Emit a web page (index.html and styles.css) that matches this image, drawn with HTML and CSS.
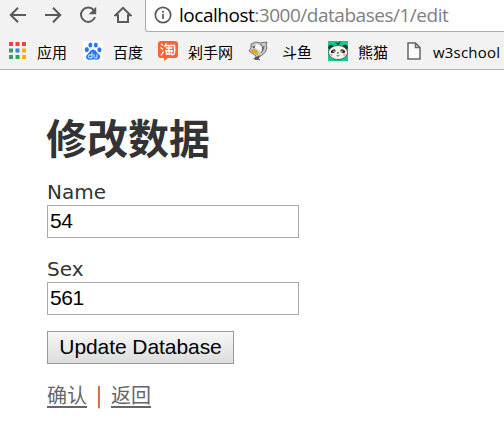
FILE: index.html
```html
<!DOCTYPE html>
<html lang="zh-CN">
<head>
<meta charset="utf-8">
<title>修改数据</title>
<link rel="stylesheet" href="styles.css">
</head>
<body>
<header class="browser">
  <div class="toolbar">
    <nav class="controls">
      <svg width="18" height="18" viewBox="0 0 18 18"><path d="M17 9H2M9 1.8 1.8 9 9 16.2"/></svg>
      <svg width="18" height="18" viewBox="0 0 18 18"><path d="M1 9h15M9 1.8 16.2 9 9 16.2"/></svg>
      <svg width="18" height="18" viewBox="0 0 18 18"><path d="M14.8 4.2A7.2 7.2 0 1 0 16 11"/><path class="solid" d="M17.2.8v7.5H9.7z"/></svg>
      <svg width="18" height="18" viewBox="0 0 18 18"><path d="M1.4 9.3 9 1.8l7.6 7.5H14V16H4V9.3z"/></svg>
    </nav>
    <div class="address">
      <svg width="18" height="18" viewBox="0 0 18 18"><circle cx="9" cy="9" r="7.7"/><path d="M9 8v5M9 4.8v2"/></svg>
      <span class="url"><span class="host">localhost</span>:3000/databases/1/edit</span>
    </div>
  </div>
  <div class="bookmarks">
    <div class="bookmark apps">
      <svg width="17" height="17" viewBox="0 0 17 17"><path fill="#f44336" d="M0 0h4v4H0zM6.5 0h4v4h-4zM13 0h4v4h-4z"/><path fill="#34a060" d="M0 6.5h4v4H0zM0 13h4v4H0zM6.5 13h4v4h-4z"/><path fill="#2f86ee" d="M6.5 6.5h4v4h-4z"/><path fill="#f9ad0b" d="M13 6.5h4v4h-4zM13 13h4v4h-4z"/></svg><span>应用</span>
    </div>
    <div class="bookmark baidu">
      <svg width="20" height="20" viewBox="0 0 20 20"><path fill="#fff" d="M0 0h20v20H0z"/><g fill="#2878f0"><ellipse cx="3.8" cy="8.6" rx="2.1" ry="2.6"/><ellipse cx="7.4" cy="4" rx="2" ry="2.6"/><ellipse cx="12.8" cy="4" rx="2" ry="2.6"/><ellipse cx="16.4" cy="8.7" rx="2.1" ry="2.5"/><path d="M10 8.5c2.5 0 3 2.2 4.7 3.8 2.3 2 3 3.2 2 5-1 2.2-4 1.2-6.7 1.2s-5.2 1-6.5-1c-1.3-2 .2-3.6 2-5.2C7.3 10.8 7.7 8.5 10 8.5z"/></g><path fill="none" stroke="#fff" stroke-width=".9" d="M9 11.5v5.4H6.7q-1.500 0-1.500-1.500t1.500-1.500H9M11 13.300v2.200q0 1.400 1.500 1.400H14v-3.600"/></svg><span>百度</span>
    </div>
    <div class="bookmark taobao">
      <svg width="20" height="20" viewBox="0 0 20 20"><path fill="#fa6533" d="M3 0h14q3 0 3 3v11q0 3-3 3h-7l-4 3v-3H3q-3 0-3-3V3q0-3 3-3z"/><path class="taobao-mark" d="M3 3l2 1.500M2.500 6.500l2.500 2M3 14.500l2.500-4M8 2.500 6.700 6M7.500 4.500h9q.7 9-1 9h-2M8 7h6.500M7 9.700h8M11 5v7M8.500 10.500V13h5v-2.500"/></svg><span>剁手网</span>
    </div>
    <div class="bookmark douyu">
      <svg width="20" height="20" viewBox="0 0 20 20"><path fill="#c8c9c8" stroke="#77736e" d="M3 3Q8-.5 12 2l7-1-1 4 1 1q-.5 6-5 8l-4 3 2 2-5-1 1-3-4-3L1 10 3 7z"/><path fill="#555" d="M4 5.500 7.500 5 6 7.500zM8 16l4-2-1 3-2 2-4-1z"/><path fill="#fafafa" d="M8 3q6 0 6 7-3 2-4-1L7 7z"/><path fill="#eca411" d="m3 9 4-1 3 2.500-1 3.500-3-2-3 1z"/><path fill="none" stroke="#67645f" d="M12 3q4 2 2 7M16 5q0 4-3 7"/></svg><span>斗鱼</span>
    </div>
    <div class="bookmark panda">
      <svg width="20" height="20" viewBox="0 0 20 20"><path fill="#18c890" d="M0 0h20v20H0z"/><g fill="#26302d"><circle cx="3" cy="6.500" r="2.700"/><circle cx="17" cy="6.500" r="2.700"/><path d="M10 4 6.500 1.500 10 2l3-2-2 3.500z"/></g><ellipse cx="10" cy="11.500" rx="9.500" ry="7" fill="#f4f4ef" stroke="#34443f" stroke-width=".7"/><g fill="#292929"><ellipse cx="5.200" cy="10.300" rx="2.500" ry="1.700" transform="rotate(-25 5.200 10.300)"/><ellipse cx="14.800" cy="10.300" rx="2.500" ry="1.700" transform="rotate(25 14.800 10.300)"/><path d="M8.700 11.500h2.600L10 13zM8 14.500h4l-2 1z"/></g><g fill="#fff"><circle cx="6" cy="10.300" r=".7"/><circle cx="14" cy="10.300" r=".7"/></g><g fill="#f2a8a0"><circle cx="3.500" cy="14" r="1.200"/><circle cx="16.500" cy="14" r="1.200"/></g></svg><span>熊猫</span>
    </div>
    <div class="bookmark school">
      <svg width="14" height="18" viewBox="0 0 14 18"><path fill="#fafafa" stroke="#666" stroke-width="1.500" d="M1 1h7.500L13 5.500V17H1zM8.500 1v4.500H13"/></svg><span>w3school</span>
    </div>
  </div>
</header>
<main>
  <h1>修改数据</h1>
  <form>
    <div class="field"><label for="name">Name</label><input id="name" type="text" value="54"></div>
    <div class="field"><label for="sex">Sex</label><input id="sex" type="text" value="561"></div>
    <button type="button">Update Database</button>
  </form>
  <div class="links"><a href="#">确认</a><span class="divider">|</span><a href="#">返回</a></div>
</main>
</body>
</html>
```

FILE: styles.css
```css
* { box-sizing: border-box; }
body {
  margin: 0;
  height: 434px;
  overflow: hidden;
  background: #fff;
  color: #333;
  font: 20px "DejaVu Sans", "Noto Sans CJK SC", sans-serif;
}
svg { display: block; flex: none; }
.browser { height: 70px; background: #f2f2f2; border-bottom: 1px solid #b5b5b5; }
.toolbar { display: flex; height: 32px; }
.controls { display: flex; gap: 17px; width: 145px; padding: 6px 0 0 9px; }
.controls svg, .address svg { fill: none; stroke: #5a5a5a; stroke-width: 2; }
.controls .solid { fill: #5a5a5a; stroke: none; }
.address {
  display: flex;
  flex: 1;
  gap: 7px;
  padding: 6px 0 0 8px;
  background: #fff;
  border: solid #aaa;
  border-width: 0 0 1px 1px;
  border-bottom-left-radius: 3px;
}
.address svg { stroke-width: 1.7; }
.url {
  margin-top: -6px;
  color: #808080;
  font: 19px/30px "Open Sans", sans-serif;
  letter-spacing: -0.48px;
  white-space: nowrap;
}
.host { color: #000; }
.bookmarks {
  display: flex;
  height: 37px;
  align-items: center;
  padding-left: 9px;
  color: #000;
  font: 15px/20px "Open Sans", "Noto Sans CJK SC", sans-serif;
  white-space: nowrap;
}
.bookmark { display: flex; align-items: center; gap: 10px; flex: none; }
.bookmark span { padding-top: 2px; }
.apps { width: 74px; gap: 11px; }
.baidu { width: 75px; }
.taobao { width: 90px; }
.douyu { width: 80px; gap: 14px; }
.panda { width: 79px; }
.school { gap: 12px; letter-spacing: .2px; }
.taobao-mark { fill: none; stroke: #fff; stroke-width: 1.4; }
main { padding: 40px 47px 0; }
h1 { margin: 0 0 0 -1px; font: bold 41px/52px "Noto Sans CJK SC", sans-serif; }
form { margin-top: 16px; }
.field { height: 77px; }
label { display: block; height: 27px; line-height: 28px; }
input {
  display: block;
  width: 252px;
  height: 33px;
  padding: 0 2px 1px;
  border: 1px solid #a9a9a9;
  color: #000;
  font: 21px "Liberation Sans", sans-serif;
  letter-spacing: -0.4px;
}
button {
  display: block;
  width: 187px;
  height: 33px;
  margin-top: -1px;
  padding: 0 0 1px;
  border: 1px solid #999;
  background: linear-gradient(#f7f7f7, #dcdcdc);
  color: #000;
  font: 21px "Liberation Sans", sans-serif;
  letter-spacing: -0.07px;
  white-space: nowrap;
}
.links {
  display: flex;
  margin-top: 16px;
  color: #833;
  font: 20px/30px "Noto Sans CJK SC", sans-serif;
}
.links a { color: #666; text-underline-offset: 3px; text-decoration-thickness: 2px; }
.divider { width: 24px; text-align: center; }
```
